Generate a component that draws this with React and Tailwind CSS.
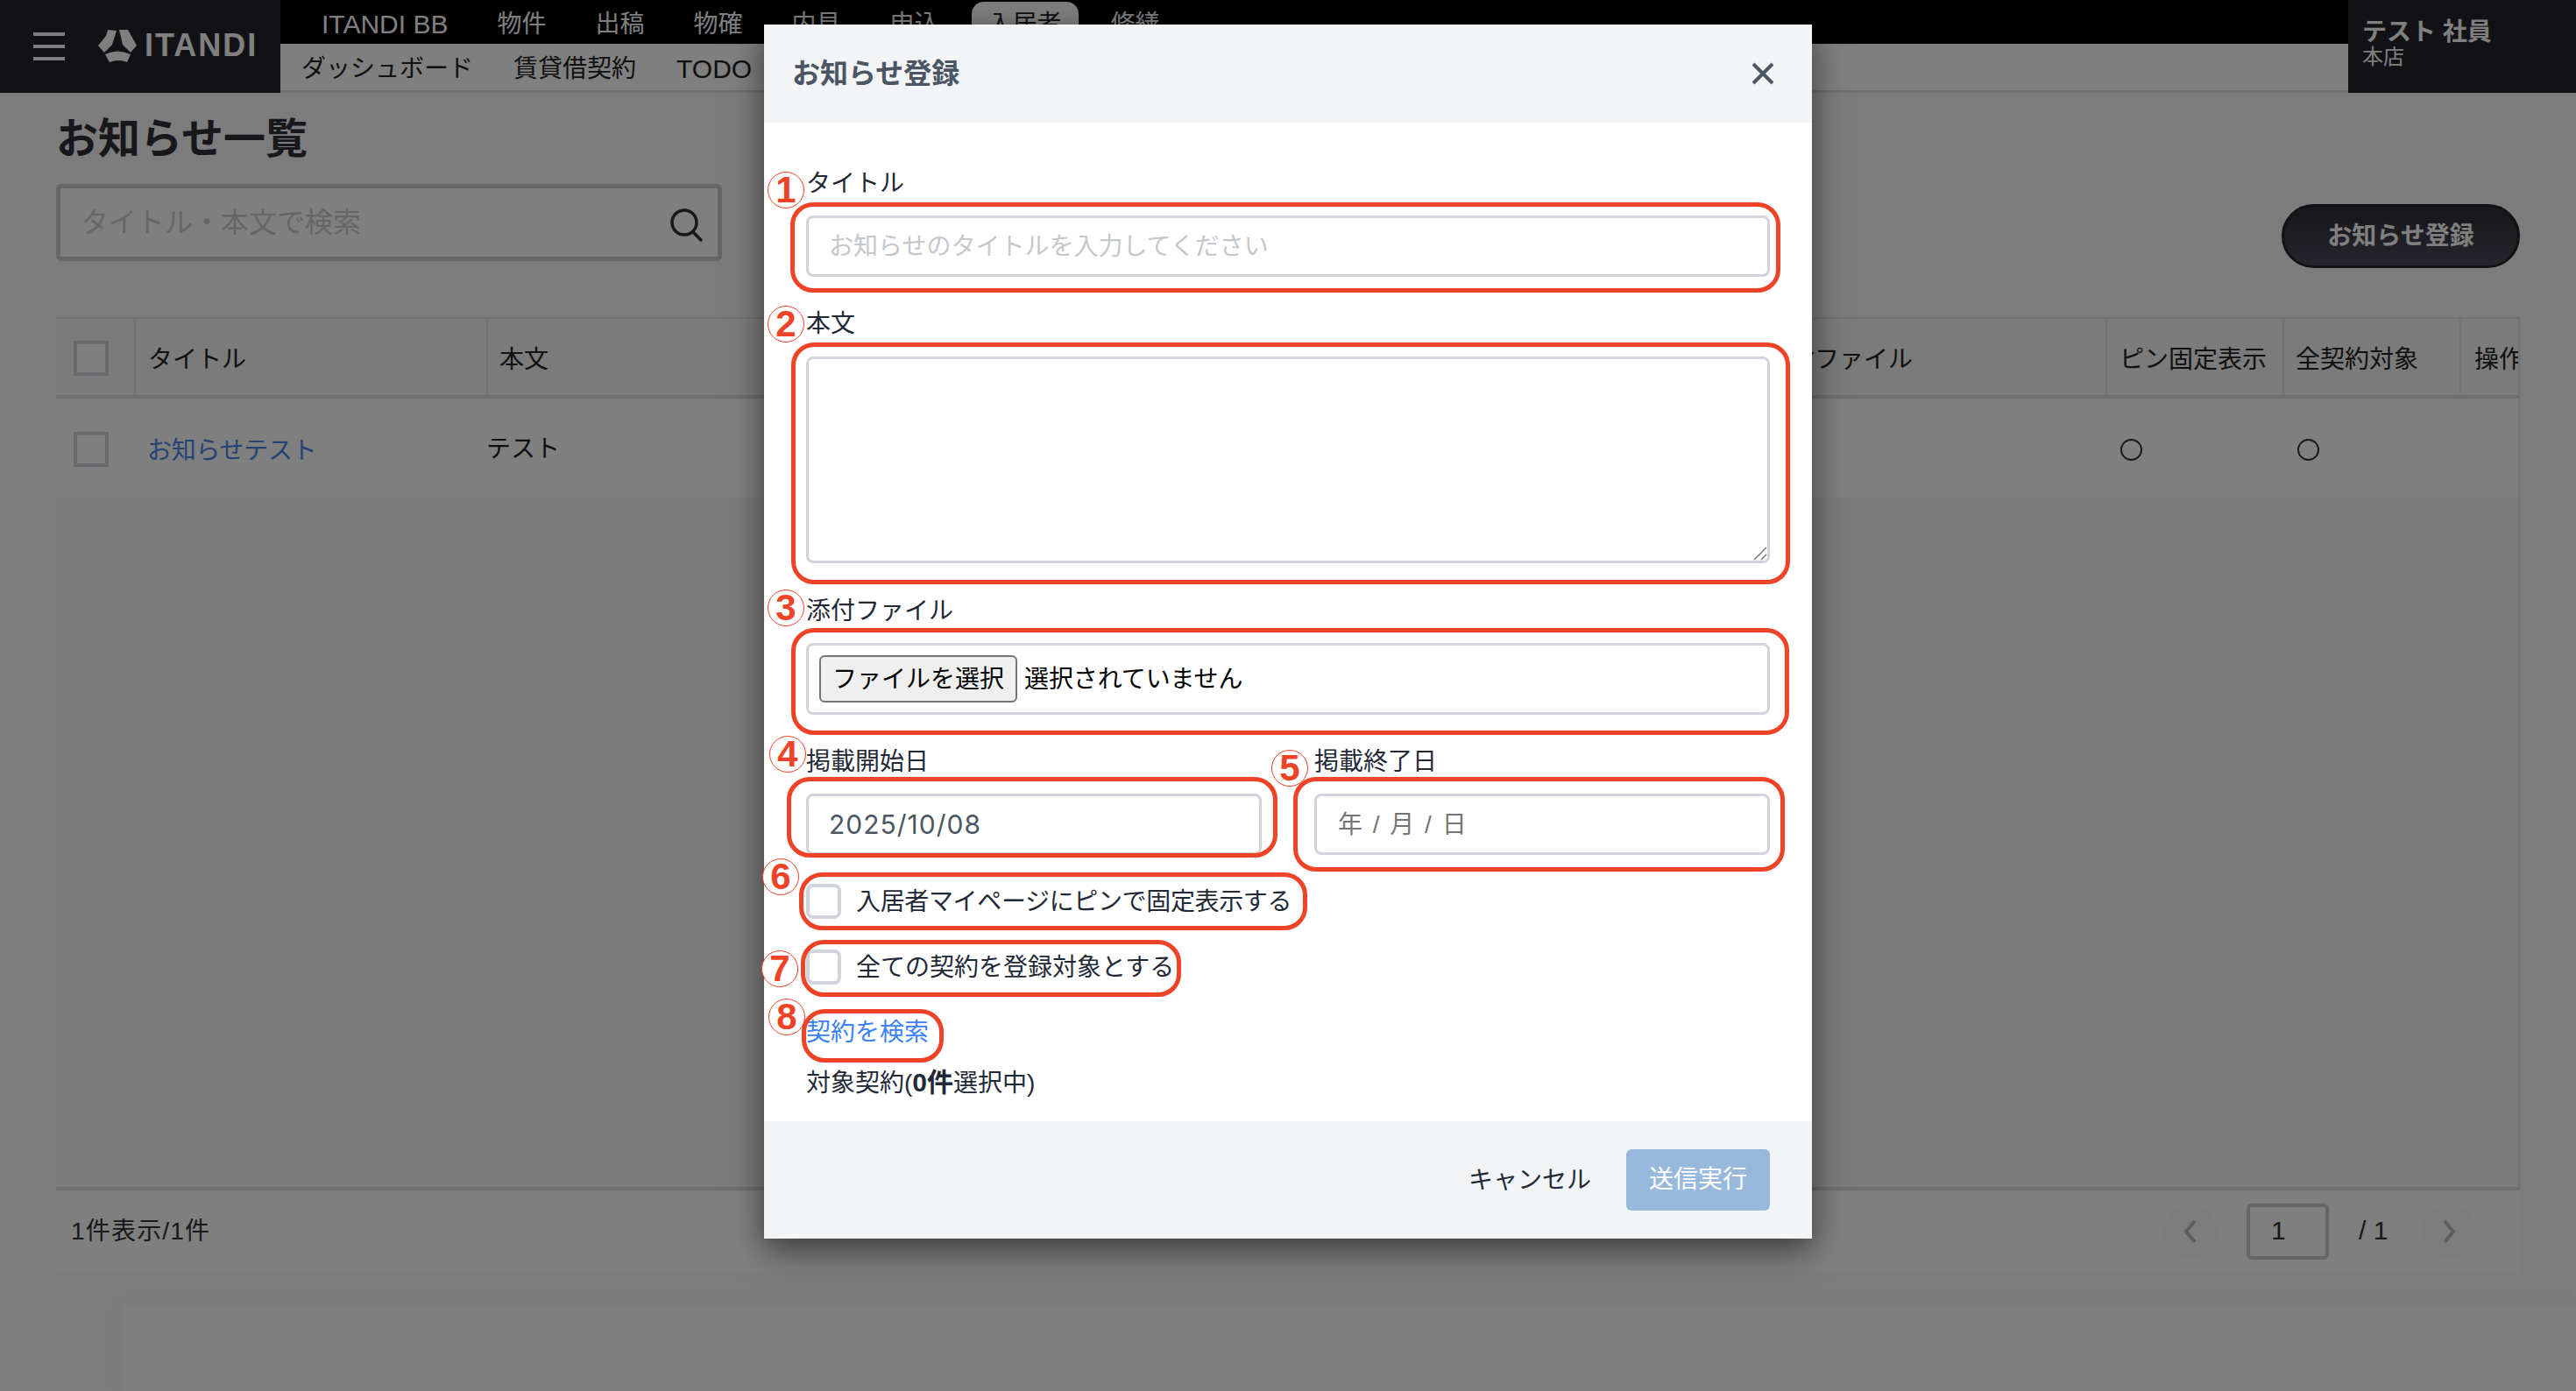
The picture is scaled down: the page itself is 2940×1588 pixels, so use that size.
import React from 'react';

const font = { fontFamily: '"Liberation Sans", "Noto Sans CJK JP", sans-serif' };

const topNav = ['ITANDI BB', '物件', '出稿', '物確', '内見', '申込', '入居者', '修繕'];

const marks = [
  { n: '1', box: 'left-[30px] top-[203px] w-[1130px] h-[103px]', dot: 'left-[4px] top-[168px]' },
  { n: '2', box: 'left-[31px] top-[363px] w-[1140px] h-[276px]', dot: 'left-[4px] top-[321px]' },
  { n: '3', box: 'left-[31px] top-[689px] w-[1139px] h-[122px]', dot: 'left-[4px] top-[645px]' },
  { n: '4', box: 'left-[26px] top-[859px] w-[560px] h-[92px]', dot: 'left-[6px] top-[812px]' },
  { n: '5', box: 'left-[604px] top-[859px] w-[561px] h-[108px]', dot: 'left-[579px] top-[828px]' },
  { n: '6', box: 'left-[40px] top-[968px] w-[580px] h-[66px]', dot: 'left-[-2px] top-[952px]' },
  { n: '7', box: 'left-[42px] top-[1045px] w-[434px] h-[65px]', dot: 'left-[-3px] top-[1057px]' },
  { n: '8', box: 'left-[43px] top-[1124px] w-[162px] h-[61px]', dot: 'left-[5px] top-[1112px]' },
];

function Logo() {
  return (
    <svg width="44" height="38" viewBox="0 0 44 38" fill="#ffffff" className="shrink-0">
      <path d="M11 1 L21 2 L16 18 L7 27 L0 19 L9 8 Z" />
      <path d="M24 1 L34 1 L44 19 L37 27 L28 18 Z" />
      <path d="M8 29 Q22 22 37 29 L33 38 Q24 34 13 38 Z" />
    </svg>
  );
}

function Check({ className = '' }) {
  return <span className={`block w-[40px] h-[40px] shrink-0 rounded-[8px] border-[4px] border-[#d1d5db] bg-white ${className}`} />;
}

function App() {
  return (
    <div className="relative w-full h-[1588px] overflow-hidden bg-[#f8f8f8] flex flex-col text-[28px] text-[#222222]" style={font}>
      {/* header */}
      <header className="flex h-[106px] shrink-0">
        <div className="w-[320px] bg-[#22222c] flex items-center pl-[38px]">
          <div className="flex flex-col gap-[10px]">
            <span className="block w-[36px] h-[4px] bg-white" />
            <span className="block w-[36px] h-[4px] bg-white" />
            <span className="block w-[36px] h-[4px] bg-white" />
          </div>
          <div className="ml-[38px] flex items-center gap-[9px] text-white mt-[-3px]">
            <Logo />
            <span className="font-bold text-[36px] tracking-[2px] leading-none">ITANDI</span>
          </div>
        </div>
        <div className="flex-1 flex flex-col">
          <div className="h-[50px] bg-black flex items-end pl-[47px] gap-[56px] text-white">
            {topNav.map((item) => (
              <span
                key={item}
                className={item === '入居者' ? 'h-[48px] px-[19px] mx-[-19px] pt-[6px] bg-white text-[#222222] rounded-t-[14px] leading-[40px]' : item === 'ITANDI BB' ? 'h-[48px] pt-[6px] leading-[40px] text-[30px]' : 'h-[48px] pt-[6px] leading-[40px]'}
              >
                {item}
              </span>
            ))}
          </div>
          <div className="h-[56px] bg-white border-b-[3px] border-[#dcdcdc] flex items-center pl-[24px] gap-[46px] pt-[4px]">
            <span>ダッシュボード</span>
            <span>賃貸借契約</span>
            <span className="text-[30px]">TODO</span>
          </div>
        </div>
        <div className="w-[260px] bg-[#22222c] text-white pl-[16px] pt-[19px]">
          <div className="font-bold leading-[36px]">テスト 社員</div>
          <div className="text-[24px] leading-[24px] mt-[-2px]">本店</div>
        </div>
      </header>

      {/* page */}
      <main className="flex-1 flex flex-col">
        <div className="pl-[64px] pr-[64px]">
          <h1 className="pt-[21px] mb-[-2px] text-[48px] leading-[64px] font-bold text-[#2e2e38]">お知らせ一覧</h1>
          <div className="mt-[21px] flex items-start justify-between">
            <div className="w-[760px] h-[88px] rounded-[6px] border-[5px] border-[#c9ccd1] bg-white flex items-center justify-between pl-[23px] pr-[15px]">
              <span className="text-[32px] text-[#cdcdcd]">タイトル・本文で検索</span>
              <svg width="40" height="40" viewBox="0 0 40 40" fill="none" stroke="#2e2e38" strokeWidth="3.5" className="mt-[8px]">
                <circle cx="17" cy="16" r="14" />
                <path d="M27 27 L36 36" strokeLinecap="round" />
              </svg>
            </div>
            <button className="mt-[23px] w-[272px] h-[73px] rounded-full border-[3px] border-[#22222c] bg-gradient-to-b from-[#2c2c36] to-[#4c4c58] text-white font-bold">
              お知らせ登録
            </button>
          </div>

          {/* table */}
          <div className="mt-[56px] h-[993px] bg-[#f6f6f6] border-t-[2px] border-r-[2px] border-[#e4e4e4] overflow-hidden">
            <div className="grid grid-cols-[89px_402px_1450px_398px_202px_202px_69px] h-[91px] bg-[#f6f6f6] border-b-[4px] border-[#dcdcdc] items-stretch">
              <div className="flex items-center pl-[20px] pt-[2px]"><Check className="rounded-none border-[#d1d5db]" /></div>
              <div className="flex items-center pl-[14px] pt-[6px] border-l-[2px] border-[#e6e6e6]">タイトル</div>
              <div className="flex items-center pl-[13px] pt-[6px] border-l-[2px] border-[#e6e6e6]">本文</div>
              <div className="flex items-center pl-[10px] pt-[6px]">添付ファイル</div>
              <div className="flex items-center pl-[14px] pt-[6px] border-l-[2px] border-[#e6e6e6]">ピン固定表示</div>
              <div className="flex items-center pl-[13px] pt-[6px] border-l-[2px] border-[#e6e6e6]">全契約対象</div>
              <div className="flex items-center pl-[15px] pt-[6px] border-l-[2px] border-[#e6e6e6] whitespace-nowrap">操作</div>
            </div>
            <div className="grid grid-cols-[89px_402px_1450px_398px_202px_202px_69px] h-[113px] bg-white items-center pt-[3px]">
              <div className="pl-[20px]"><Check className="rounded-none" /></div>
              <div className="pl-[15px] pt-[3px] text-[#4a86e8] tracking-[-0.3px]">お知らせテスト</div>
              <div className="pl-[0px]">テスト</div>
              <div />
              <div className="pl-[17px]"><span className="block w-[25px] h-[25px] rounded-full border-[2px] border-[#333333]" /></div>
              <div className="pl-[17px]"><span className="block w-[25px] h-[25px] rounded-full border-[2px] border-[#333333]" /></div>
              <div />
            </div>
          </div>

          {/* list footer */}
          <div className="h-[97px] bg-white border-t-[4px] border-[#dcdcdc] flex items-center justify-between pl-[17px] pr-[50px] text-[#333333]">
            <span className="tracking-[1.2px]">1件表示/1件</span>
            <div className="flex items-center">
              <span className="w-[62px] h-[62px] rounded-full bg-[#fafafa] flex items-center justify-center">
                <svg width="16" height="28" viewBox="0 0 16 28" fill="none" stroke="#bdbdbd" strokeWidth="4"><path d="M13 2 L3 14 L13 26" /></svg>
              </span>
              <span className="ml-[33px] w-[94px] h-[64px] rounded-[6px] border-[4px] border-[#c9ccd1] bg-white pl-[24px] leading-[54px] text-[30px]">1</span>
              <span className="ml-[34px] w-[72px] whitespace-nowrap text-[30px] mt-[-3px]">/ 1</span>
              <span className="w-[62px] h-[62px] rounded-full bg-[#fafafa] flex items-center justify-center">
                <svg width="16" height="28" viewBox="0 0 16 28" fill="none" stroke="#bdbdbd" strokeWidth="4"><path d="M3 2 L13 14 L3 26" /></svg>
              </span>
            </div>
          </div>
        </div>
        <div className="flex-1 ml-[140px] mt-[40px] bg-[#fdfdfd] shadow-[0_0_30px_rgba(0,0,0,0.04)]" />
      </main>

      {/* backdrop */}
      <div className="absolute inset-0 bg-black/50" />

      {/* modal */}
      <div className="absolute left-[872px] top-[28px] w-[1196px] h-[1386px] bg-white flex flex-col shadow-[0_12px_36px_rgba(0,0,0,0.55)]">
        <div className="h-[112px] shrink-0 bg-[#f3f4f6] flex items-center justify-between pl-[32px] pr-[43px]">
          <span className="text-[32px] font-bold text-[#4b5563]">お知らせ登録</span>
          <svg width="26" height="26" viewBox="0 0 26 26" fill="none" stroke="#4b5563" strokeWidth="4"><path d="M2 2 L24 24 M24 2 L2 24" /></svg>
        </div>

        <div className="flex-1 px-[48px] pt-[48px] text-[#1f2937]">
          <label className="block h-[40px] leading-[44px] mb-[18px]">タイトル</label>
          <input
            type="text"
            placeholder="お知らせのタイトルを入力してください"
            className="block w-full h-[70px] pl-[23px] pr-[26px] pt-[2px] rounded-[8px] border-[3px] border-[#d1d5db] placeholder:text-[#c4c7cc] outline-none"
          />
          <label className="block h-[40px] leading-[42px] mt-[33px] mb-[18px]">本文</label>
          <div className="relative">
            <textarea className="block w-full h-[236px] rounded-[8px] border-[3px] border-[#d1d5db] outline-none resize-none" />
            <svg width="16" height="16" viewBox="0 0 16 16" fill="none" stroke="#777777" strokeWidth="1.5" className="absolute right-[3px] bottom-[3px]">
              <path d="M1 15 L15 1 M9 15 L15 9" />
            </svg>
          </div>
          <label className="block h-[40px] leading-[42px] mt-[34px] mb-[17px]">添付ファイル</label>
          <div className="h-[82px] rounded-[8px] border-[3px] border-[#d1d5db] flex items-center pl-[12px] text-black">
            <span className="w-[226px] h-[54px] rounded-[6px] border-[2px] border-[#767676] bg-[#efefef] flex items-center justify-center pt-[2px]">ファイルを選択</span>
            <span className="ml-[8px] pt-[2px] tracking-[-0.1px]">選択されていません</span>
          </div>
          <div className="mt-[34px] flex gap-[60px]">
            <div className="w-[520px]">
              <label className="block h-[40px] leading-[40px] mb-[16px]">掲載開始日</label>
              <input
                type="text"
                readOnly
                value="2025/10/08"
                className="block w-full h-[70px] pl-[23px] pr-[24px] rounded-[8px] border-[3px] border-[#d1d5db] text-[30px] tracking-[1px] text-[#4b5563] outline-none"
                style={{ fontFamily: 'Inter, sans-serif' }}
              />
            </div>
            <div className="w-[520px]">
              <label className="block h-[40px] leading-[40px] mb-[16px]">掲載終了日</label>
              <input
                type="text"
                readOnly
                placeholder="年 / 月 / 日"
                className="block w-full h-[70px] px-[24px] pt-[2px] rounded-[8px] border-[3px] border-[#d1d5db] text-[28px] tracking-[2px] placeholder:text-[#757575] outline-none"
              />
            </div>
          </div>
          <div className="mt-[33px] flex items-center h-[40px]">
            <Check />
            <span className="ml-[17px] pt-[2px] tracking-[-0.35px]">入居者マイページにピンで固定表示する</span>
          </div>
          <div className="mt-[35px] flex items-center h-[40px]">
            <Check />
            <span className="ml-[17px] pt-[2px]">全ての契約を登録対象とする</span>
          </div>
          <div className="mt-[35px] h-[40px] leading-[40px] text-[#3b82f6]">契約を検索</div>
          <div className="mt-[18px] h-[40px] leading-[38px]">対象契約(<b className="text-[30px]">0件</b>選択中)</div>
        </div>

        <div className="h-[134px] shrink-0 bg-[#f3f4f6] flex items-center justify-end pr-[48px]">
          <span className="text-[#1f2937] pt-[2px]">キャンセル</span>
          <button className="ml-[40px] w-[164px] h-[70px] rounded-[6px] bg-[#98b9dc] text-white">送信実行</button>
        </div>

        {/* red annotations */}
        {marks.map((m) => (
          <React.Fragment key={m.n}>
            <div className={`absolute ${m.box} rounded-[26px] border-[5px] border-[#ee4327] pointer-events-none`} />
            <div className={`absolute ${m.dot} w-[42px] h-[42px] rounded-full border-[1.5px] border-[#ee4327] bg-white flex items-center justify-center text-[42px] font-bold text-[#ee4327] leading-none`}>
              {m.n}
            </div>
          </React.Fragment>
        ))}
      </div>
    </div>
  );
}

export default App;
